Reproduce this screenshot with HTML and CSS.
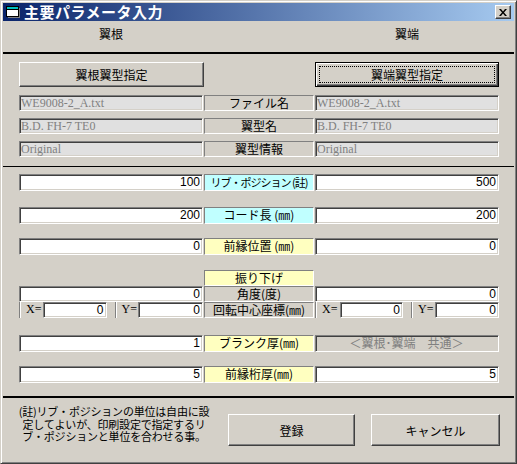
FILE: index.html
```html
<!DOCTYPE html>
<html lang="ja">
<head>
    <meta charset="UTF-8">
    <title>主要パラメータ入力</title>
    <link rel="stylesheet" href="styles.css">
</head>
<body>
    <div class="window">
        <!-- Title bar -->
        <div class="titlebar">
            <svg class="title-icon" width="16" height="16" viewBox="0 0 16 16">
                <rect x="1.5" y="2.5" width="12" height="10" fill="#fff" stroke="#000"/>
                <rect x="2" y="3" width="11" height="2" fill="#00c0c0"/>
                <line x1="1.5" y1="5.5" x2="13.5" y2="5.5" stroke="#000"/>
                <rect x="14" y="4" width="1" height="9" fill="#808080"/>
                <rect x="3" y="13" width="12" height="1" fill="#808080"/>
            </svg>
            <span class="title-text">主要パラメータ入力</span>
            <div class="close-btn">
                <svg width="8" height="7" viewBox="0 0 8 7">
                    <path d="M0 0h2l2 2.5L6 0h2L5 3.5 8 7H6L4 4.5 2 7H0l3-3.5z" fill="#000"/>
                </svg>
            </div>
        </div>

        <div class="client">
            <div class="row head-row">
                <div class="head">翼根</div>
                <div class="head right">翼端</div>
            </div>
            <div class="rule thick"></div>

            <div class="row btn-row">
                <div class="button pick">翼根翼型指定</div>
                <div class="button pick default"><span class="focus">翼端翼型指定</span></div>
            </div>

            <!-- airfoil file info -->
            <div class="row gap-8">
                <div class="field off">WE9008-2_A.txt</div>
                <div class="label">ファイル名</div>
                <div class="field off">WE9008-2_A.txt</div>
            </div>
            <div class="row gap-7">
                <div class="field off">B.D. FH-7 TE0</div>
                <div class="label">翼型名</div>
                <div class="field off">B.D. FH-7 TE0</div>
            </div>
            <div class="row gap-7">
                <div class="field off">Original</div>
                <div class="label">翼型情報</div>
                <div class="field off">Original</div>
            </div>
            <div class="rule thin"></div>

            <!-- numeric parameters -->
            <div class="row tall gap-7">
                <div class="field">100</div>
                <div class="label cyan tight">リブ・ポジション (註)</div>
                <div class="field">500</div>
            </div>
            <div class="row tall gap-16">
                <div class="field">200</div>
                <div class="label cyan">コード長 (㎜)</div>
                <div class="field">200</div>
            </div>
            <div class="row tall gap-14">
                <div class="field">0</div>
                <div class="label yellow">前縁位置 (㎜)</div>
                <div class="field">0</div>
            </div>

            <div class="row gap-15">
                <div class="label yellow solo">振り下げ</div>
            </div>
            <div class="row">
                <div class="field">0</div>
                <div class="label">角度(度)</div>
                <div class="field">0</div>
            </div>
            <div class="row">
                <div class="xy-group">
                    <div class="xy-label">X=</div>
                    <div class="field small">0</div>
                    <div class="xy-label spaced">Y=</div>
                    <div class="field small wider">0</div>
                </div>
                <div class="label">回転中心座標(㎜)</div>
                <div class="xy-group">
                    <div class="xy-label wider">X=</div>
                    <div class="field small narrow">0</div>
                    <div class="xy-label spaced">Y=</div>
                    <div class="field small">0</div>
                </div>
            </div>

            <div class="row tall gap-17">
                <div class="field">1</div>
                <div class="label yellow">ブランク厚(㎜)</div>
                <div class="field common">＜翼根･翼端　共通＞</div>
            </div>
            <div class="row tall gap-14">
                <div class="field">5</div>
                <div class="label yellow">前縁桁厚(㎜)</div>
                <div class="field">5</div>
            </div>
            <div class="rule thick gap-13"></div>

            <div class="bottom">
                <div class="note">(註)リブ・ポジションの単位は自由に設<br>定してよいが、印刷設定で指定するリ<br>ブ・ポジションと単位を合わせる事。</div>
                <div class="button action">登録</div>
                <div class="button action cancel">キャンセル</div>
            </div>
        </div>
    </div>
</body>
</html>
```

FILE: styles.css
```css
body {
    margin: 0;
    font-family: "Liberation Sans", "Noto Sans CJK JP", sans-serif;
    font-size: 12px;
    color: #000;
}

/* Window frame */
.window {
    width: 517px;
    height: 464px;
    box-sizing: border-box;
    background: #d4d0c8;
    border: 1px solid;
    border-color: #d4d0c8 #404040 #404040 #d4d0c8;
    box-shadow: inset 1px 1px #fff, inset -1px -1px #808080;
    padding: 2px;
}

.titlebar {
    height: 18px;
    display: flex;
    align-items: center;
    background: linear-gradient(to right, #0a246a, #a6caf0);
    margin-bottom: 1px;
}

.title-icon {
    margin-left: 2px;
    flex: none;
}

.title-text {
    margin-left: 3px;
    color: #fff;
    font-family: "Noto Sans CJK JP", sans-serif;
    font-weight: bold;
    font-size: 15px;
    letter-spacing: 0.5px;
    line-height: 18px;
}

.close-btn {
    margin-left: auto;
    margin-right: 3px;
    width: 16px;
    height: 14px;
    box-sizing: border-box;
    background: #d4d0c8;
    border: 1px solid;
    border-color: #fff #404040 #404040 #fff;
    box-shadow: inset -1px -1px #808080;
    display: flex;
    justify-content: center;
    align-items: center;
    padding-right: 1px;
}

/* Client area */
.client {
    padding-left: 16px;
}

.row {
    display: flex;
    height: 16px;
}

.row.tall {
    height: 17px;
}

.gap-7 { margin-top: 7px; }
.gap-8 { margin-top: 8px; }
.gap-13 { margin-top: 13px; }
.gap-14 { margin-top: 14px; }
.gap-15 { margin-top: 15px; }
.gap-16 { margin-top: 16px; }
.gap-17 { margin-top: 17px; }

.head-row {
    height: 30px;
}

.head {
    width: 184px;
    text-align: center;
    line-height: 24px;
    font-family: "Noto Sans CJK JP", sans-serif;
}

.head.right {
    margin-left: 112px;
}

.rule {
    margin-left: -16px;
    width: 511px;
    background: #000;
}

.rule.thick {
    height: 2px;
}

.rule.thin {
    height: 1px;
    margin-top: 9px;
}

/* Buttons */
.button {
    box-sizing: border-box;
    background: #d4d0c8;
    border: 1px solid;
    border-color: #fff #404040 #404040 #fff;
    box-shadow: inset -1px -1px #808080;
    display: flex;
    justify-content: center;
    align-items: center;
    font-family: "Noto Sans CJK JP", sans-serif;
    font-size: 12px;
}

.btn-row {
    margin-top: 8px;
    height: 25px;
}

.button.pick {
    width: 185px;
    height: 25px;
}

.button.default {
    width: 184px;
    margin-left: 111px;
    border: 1px solid #000;
    box-shadow: inset 1px 1px #fff, inset -1px -1px #404040, inset -2px -2px #808080;
    padding: 3px;
}

.focus {
    flex: 1;
    align-self: stretch;
    border: 1px dotted #000;
    display: flex;
    justify-content: center;
    align-items: center;
}

/* Text boxes */
.field {
    width: 184px;
    box-sizing: border-box;
    background: #fff;
    border: 1px solid;
    border-color: #808080 #fff #fff #808080;
    box-shadow: inset 1px 1px #404040, inset -1px -1px #d4d0c8;
    text-align: right;
    padding: 0 2px 0 1px;
    line-height: 14px;
    white-space: nowrap;
    overflow: hidden;
}

.field.off {
    background: #e0e0e0;
    color: #808080;
    text-align: left;
    font-family: "Liberation Serif", serif;
}

.field.common {
    background: #d4d0c8;
    color: #808080;
    text-align: center;
    font-family: "Noto Sans CJK JP", sans-serif;
}

.field.small {
    width: 64px;
}

.field.small.wider {
    width: 65px;
}

.field.small.narrow {
    width: 63px;
}

/* Centre captions */
.label {
    width: 110px;
    margin: 0 1px;
    box-sizing: border-box;
    border: 1px solid;
    border-color: #808080 #fff #fff #808080;
    text-align: center;
    font-family: "Noto Sans CJK JP", sans-serif;
    line-height: 14px;
    white-space: nowrap;
    overflow: hidden;
}

.label.tight {
    font-size: 11px;
    letter-spacing: -1px;
}

.label.cyan {
    background: #c0ffff;
}

.label.yellow {
    background: #ffffc0;
}

.label.solo {
    margin-left: 185px;
}

.xy-group {
    display: flex;
    width: 184px;
}

.xy-label {
    width: 24px;
    box-sizing: border-box;
    border-left: 1px solid #808080;
    box-shadow: inset 1px 0 #fff;
    padding-left: 6px;
    font-family: "Liberation Serif", serif;
    line-height: 15px;
}

.xy-label.wider {
    width: 25px;
}

.xy-label.spaced {
    margin-left: 8px;
}

/* Footer */
.bottom {
    display: flex;
    margin-left: -3px;
}

.note {
    width: 196px;
    padding-top: 7px;
    text-align: center;
    font-family: "Noto Sans CJK JP", sans-serif;
    font-size: 11px;
    line-height: 12.5px;
    white-space: nowrap;
    letter-spacing: -0.2px;
}

.button.action {
    margin-top: 16px;
    margin-left: 16px;
    width: 127px;
    height: 32px;
}

.button.cancel {
    width: 129px;
}
```
